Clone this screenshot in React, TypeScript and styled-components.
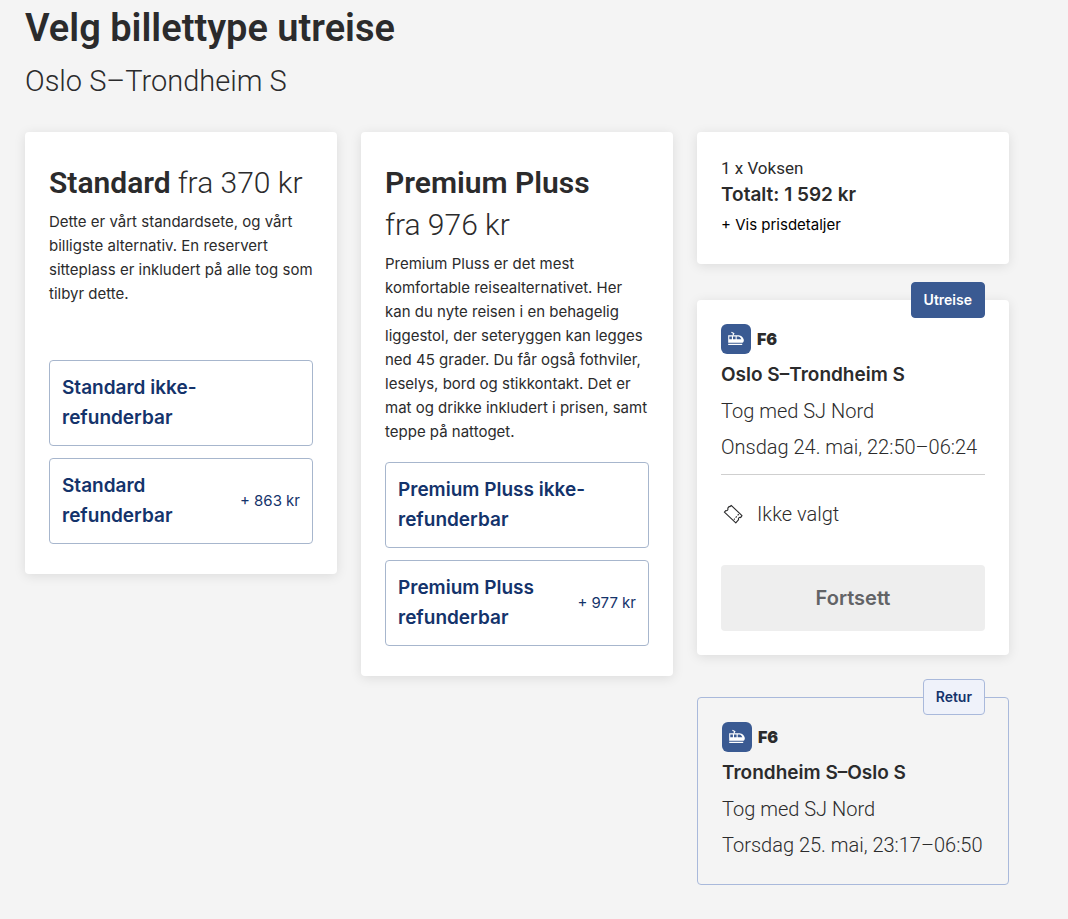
import React from 'react';
import styled, { createGlobalStyle, css } from 'styled-components';

const text = '#2b2b2c';
const navy = '#14336b';
const blue = '#3a5a92';
const display = "Roboto, 'Liberation Sans', sans-serif";
const body = "Inter, 'Liberation Sans', sans-serif";

const GlobalStyle = createGlobalStyle`
  *, *::before, *::after { box-sizing: border-box; }
  body { margin: 0; background: #f4f4f4; color: ${text}; font: 400 15px/24px ${body}; }
  h1, h2, h3, p, ul { margin: 0; padding: 0; }
  button { font: inherit; color: inherit; cursor: pointer; }
`;

const Page = styled.main`
  padding: 4px 59px 34px 25px;
`;

const Title = styled.h1`
  font: 600 38px/48px ${display};
`;

const Route = styled.p`
  padding-top: 8px;
  font: 300 29px/42px ${display};
`;

const Columns = styled.div`
  display: grid;
  grid-template-columns: repeat(3, minmax(0, 1fr));
  align-items: start;
  gap: 24px;
  margin-top: 30px;
`;

const surface = css`
  background: #fff;
  border-radius: 4px;
  box-shadow: 0 2px 12px rgba(0, 0, 0, 0.1);
`;

const TicketCard = styled.section`
  ${surface}
  padding: 30px 24px;
`;

const CardIntro = styled.div`
  min-height: 180px;
`;

const CardTitle = styled.h2`
  display: flex;
  flex-wrap: wrap;
  column-gap: 7px;
  margin-bottom: 6px;
  font: 300 30px/42px ${display};
`;

const CardName = styled.strong`
  font-weight: 600;
`;

const CardPrice = styled.span`
  white-space: nowrap;
`;

const Options = styled.div`
  display: grid;
  gap: 12px;
  margin-top: 18px;
`;

const Option = styled.button`
  display: flex;
  align-items: center;
  justify-content: space-between;
  gap: 12px;
  padding: 12px;
  border: 1px solid #a7b6cd;
  border-radius: 4px;
  background: #fff;
  color: ${navy};
  text-align: left;
`;

const OptionName = styled.span`
  max-width: 190px;
  font-size: 19px;
  font-weight: 600;
  line-height: 30px;
`;

const OptionPrice = styled.span`
  white-space: nowrap;
`;

const Sidebar = styled.aside`
  display: flex;
  flex-direction: column;
`;

const Summary = styled.section`
  ${surface}
  padding: 24px;
`;

const Passengers = styled.p`
  font: 400 17px/24px ${display};
`;

const Total = styled.p`
  font-size: 19px;
  font-weight: 600;
  line-height: 30px;
`;

const DetailsToggle = styled.button`
  display: block;
  padding: 3px 0;
  border: 0;
  background: none;
  color: #000;
`;

const Journey = styled.section<{ $outlined?: boolean }>`
  position: relative;
  padding: 24px;
  ${({ $outlined }) =>
    $outlined
      ? css`
          margin-top: 42px;
          border: 1px solid #a9b9db;
          border-radius: 4px;
        `
      : css`
          ${surface}
          margin-top: 36px;
        `}
`;

const Badge = styled.span<{ $outlined?: boolean }>`
  position: absolute;
  top: ${({ $outlined }) => ($outlined ? '-19px' : '-18px')};
  right: ${({ $outlined }) => ($outlined ? '23px' : '24px')};
  padding: 5px 12px;
  border: 1px solid ${({ $outlined }) => ($outlined ? '#a9b9db' : blue)};
  border-radius: 4px;
  background: ${({ $outlined }) => ($outlined ? '#eff2fa' : blue)};
  color: ${({ $outlined }) => ($outlined ? navy : '#fff')};
  font-size: 14px;
  font-weight: 600;
  line-height: 24px;
`;

const Rows = styled.div`
  display: grid;
  gap: 6px;
`;

const Line = styled.div`
  display: flex;
  align-items: center;
  gap: 6px;
  font-size: 16px;
  font-weight: 900;
  line-height: 30px;
`;

const LineIcon = styled.span`
  display: flex;
  border-radius: 6px;
  background: ${blue};
`;

const JourneyTitle = styled.h3`
  font-size: 19px;
  font-weight: 600;
  line-height: 30px;
`;

const JourneyInfo = styled.p`
  font: 300 20px/30px ${display};
`;

const Selection = styled.div`
  display: flex;
  align-items: center;
  gap: 12px;
  margin-top: 12px;
  padding: 24px 0 36px;
  border-top: 1px solid #cfcfcf;
`;

const Continue = styled.button`
  display: block;
  width: 100%;
  padding: 18px;
  border: 0;
  border-radius: 4px;
  background: #eee;
  color: #626366;
  font-size: 20px;
  font-weight: 600;
  line-height: 30px;
  cursor: default;
`;

function TrainIcon() {
  return (
    <svg width="30" height="30" viewBox="0 0 30 30" aria-hidden="true">
      <path d="M7.2 11.2H17.6C20.4 11.2 22.8 14.2 22.8 16.4C22.8 17.8 21.9 18.7 20.6 18.7H7.2Z" fill="#fff" />
      <path d="M8.3 12.6H10.9V15.3H8.3ZM12 12.6H14.6V15.3H12ZM15.7 12.6H17.4C18.6 12.6 19.7 13.8 20.4 15.3H15.7Z" fill={blue} />
      <path d="M10.4 8.2L12.8 9.4L11.8 11.4M7.2 20.4H21.2" stroke="#fff" strokeWidth="1.1" fill="none" />
    </svg>
  );
}

function TicketIcon() {
  return (
    <svg width="24" height="24" viewBox="0 0 24 24" aria-hidden="true" fill="none" stroke={text} strokeWidth="1.1" strokeLinejoin="round">
      <path d="M10.2 3.4L21 13.6L19.6 15.6C18.2 15 17 16.2 17.6 17.6L14.8 20.8L3.4 10.2L4.8 8.6C6.2 9 7.4 7.8 6.8 6.2L8.2 4.4C8.8 4.9 9.6 4.4 10.2 3.4Z" />
      <path d="M17.7 12.2L12.9 17.6" strokeDasharray="1.6 1.4" />
    </svg>
  );
}

type OptionData = { name: string; price?: string };

function Fare({ name, from, description, options }: { name: string; from: string; description: string; options: OptionData[] }) {
  return (
    <TicketCard>
      <CardIntro>
        <CardTitle>
          <CardName>{name}</CardName>
          <CardPrice>{from}</CardPrice>
        </CardTitle>
        <p>{description}</p>
      </CardIntro>
      <Options>
        {options.map((option) => (
          <Option key={option.name} type="button">
            <OptionName>{option.name}</OptionName>
            {option.price && <OptionPrice>{option.price}</OptionPrice>}
          </Option>
        ))}
      </Options>
    </TicketCard>
  );
}

function JourneyDetails({ title, time }: { title: string; time: string }) {
  return (
    <Rows>
      <Line>
        <LineIcon>
          <TrainIcon />
        </LineIcon>
        F6
      </Line>
      <JourneyTitle>{title}</JourneyTitle>
      <JourneyInfo>Tog med SJ Nord</JourneyInfo>
      <JourneyInfo>{time}</JourneyInfo>
    </Rows>
  );
}

export default function App() {
  return (
    <Page lang="no">
      <GlobalStyle />
      <Title>Velg billettype utreise</Title>
      <Route>Oslo S–Trondheim S</Route>
      <Columns>
        <Fare
          name="Standard"
          from="fra 370 kr"
          description="Dette er vårt standardsete, og vårt billigste alternativ. En reservert sitteplass er inkludert på alle tog som tilbyr dette."
          options={[{ name: 'Standard ikke-refunderbar' }, { name: 'Standard refunderbar', price: '+ 863 kr' }]}
        />
        <Fare
          name="Premium Pluss"
          from="fra 976 kr"
          description="Premium Pluss er det mest komfortable reisealternativet. Her kan du nyte reisen i en behagelig liggestol, der seteryggen kan legges ned 45 grader. Du får også fothviler, leselys, bord og stikkontakt. Det er mat og drikke inkludert i prisen, samt teppe på nattoget."
          options={[{ name: 'Premium Pluss ikke-refunderbar' }, { name: 'Premium Pluss refunderbar', price: '+ 977 kr' }]}
        />
        <Sidebar>
          <Summary>
            <Passengers>1 x Voksen</Passengers>
            <Total>Totalt: 1 592 kr</Total>
            <DetailsToggle type="button">+ Vis prisdetaljer</DetailsToggle>
          </Summary>
          <Journey>
            <Badge>Utreise</Badge>
            <JourneyDetails title="Oslo S–Trondheim S" time="Onsdag 24. mai, 22:50–06:24" />
            <Selection>
              <TicketIcon />
              <JourneyInfo>Ikke valgt</JourneyInfo>
            </Selection>
            <Continue type="button" disabled>
              Fortsett
            </Continue>
          </Journey>
          <Journey $outlined>
            <Badge $outlined>Retur</Badge>
            <JourneyDetails title="Trondheim S–Oslo S" time="Torsdag 25. mai, 23:17–06:50" />
          </Journey>
        </Sidebar>
      </Columns>
    </Page>
  );
}
